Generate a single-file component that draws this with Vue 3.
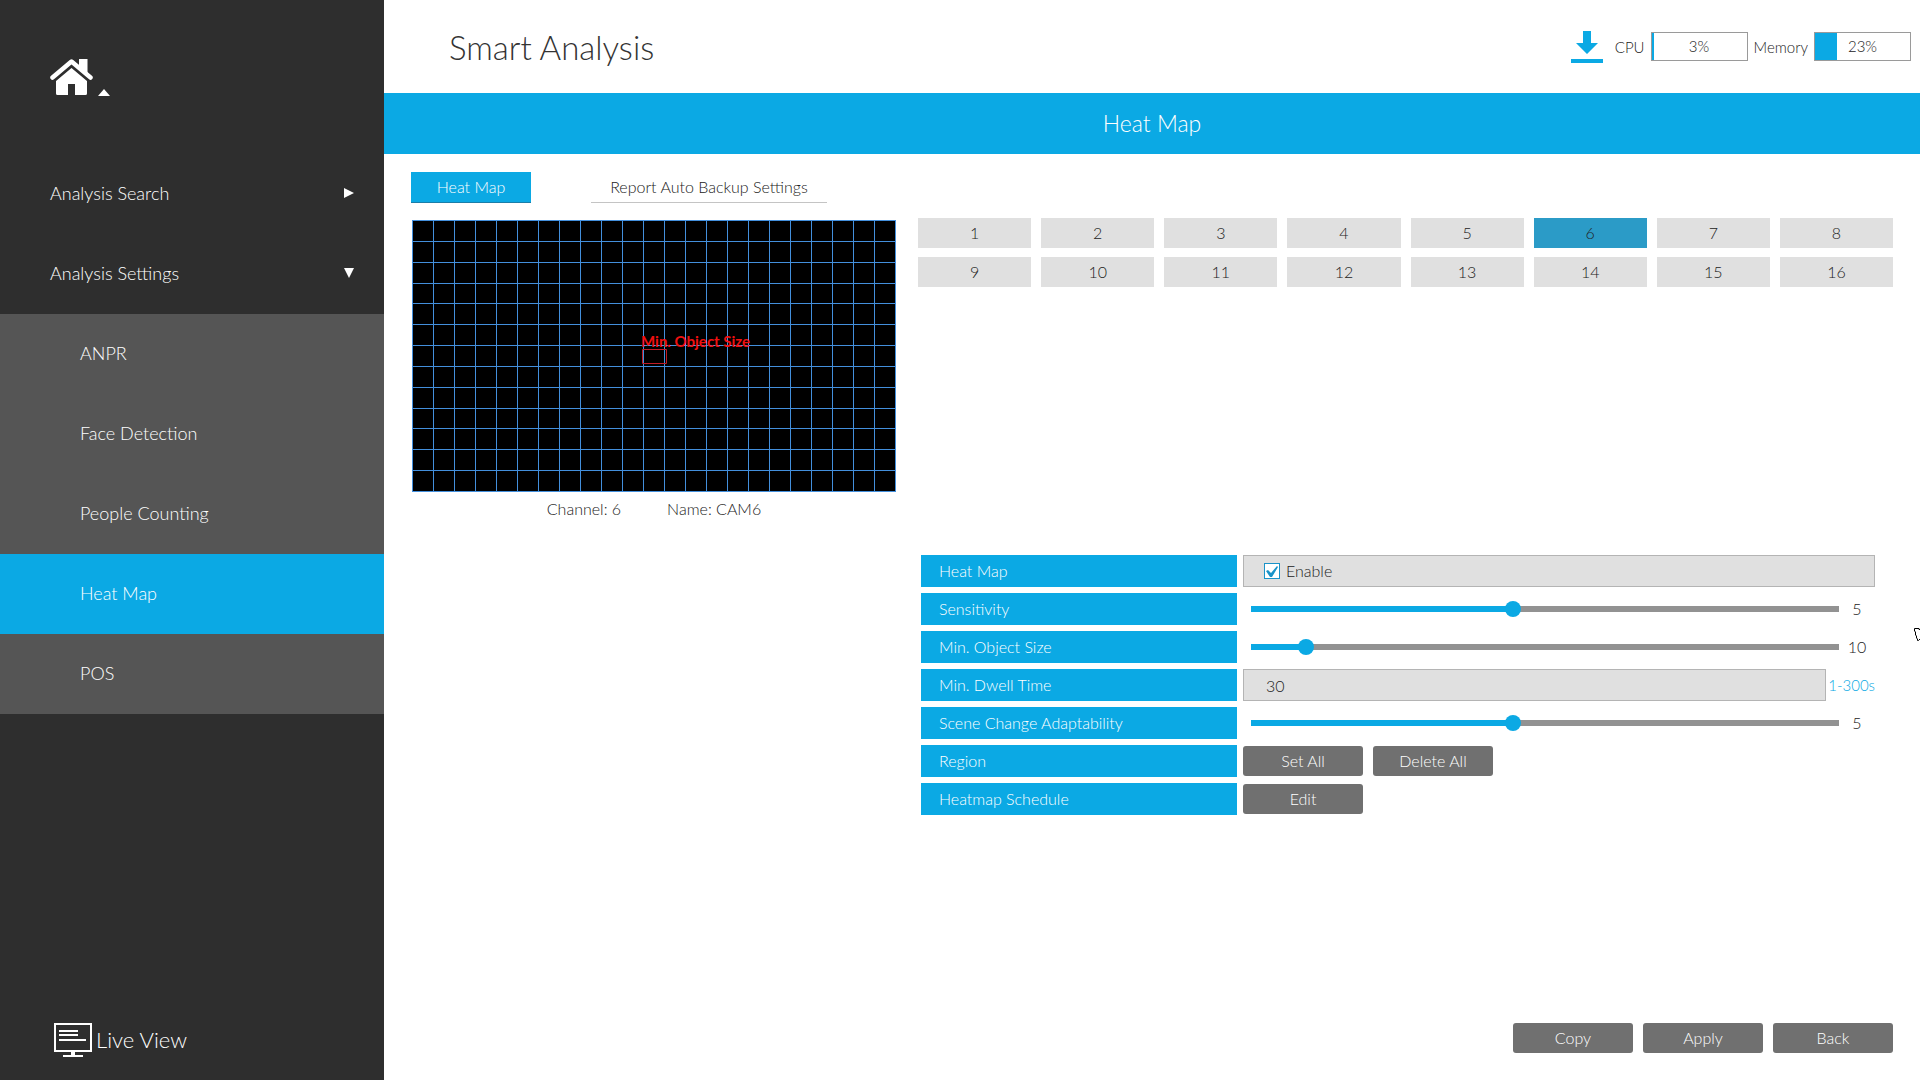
<script setup>
import { ref } from 'vue'

const subItems = ['ANPR', 'Face Detection', 'People Counting', 'Heat Map', 'POS']
const activeItem = ref('Heat Map')

const meters = [
  { label: 'CPU', value: 3 },
  { label: 'Memory', value: 23 },
]

const channel = ref(6)
const enabled = ref(true)
const sensitivity = ref(5)
const objectSize = ref(10)
const dwellTime = ref('30')
const adaptability = ref(5)

const columnLines = Array.from({ length: 24 }, (_, i) => i * 21)
const rowLines = [0, 21, 42, 63, 83, 104, 125, 146, 167, 188, 208, 229, 250, 271]

// The fill ends under the centre of the 16px thumb.
function fill(value, min, max) {
  const ratio = (value - min) / (max - min)
  return { '--fill': `calc(8px + (100% - 16px) * ${ratio})` }
}
</script>

<template>
  <div class="app">
    <aside class="sidebar">
      <div class="home-row">
        <button class="home" type="button" aria-label="Home">
          <svg width="60" height="38" viewBox="0 0 60 38" fill="#fff">
            <path d="M6 22 21.5 9 37 22V34.5a1.500 1.500 0 0 1-1.500 1.500H25V25H18V36H7.500A1.500 1.500 0 0 1 6 34.500Z" />
            <path d="M2.500 18.500 21.500 2.500 40.500 18.500" fill="none" stroke="#fff" stroke-width="4.500" stroke-linecap="round" stroke-linejoin="round" />
            <path d="M29 0H37.500V15L29 8Z" />
            <path d="M48 37 54 30 60 37Z" />
          </svg>
        </button>
      </div>
      <nav class="menu">
        <button class="menu-item" type="button">
          <span>Analysis Search</span>
          <svg width="10" height="10" viewBox="0 0 10 10"><path d="M0 0 10 5 0 10Z" fill="#fff" /></svg>
        </button>
        <button class="menu-item" type="button">
          <span>Analysis Settings</span>
          <svg width="10" height="10" viewBox="0 0 10 10"><path d="M0 0H10L5 10Z" fill="#fff" /></svg>
        </button>
        <div class="submenu">
          <button
            v-for="item in subItems"
            :key="item"
            class="sub-item"
            :class="{ active: item === activeItem }"
            type="button"
            @click="activeItem = item"
          >{{ item }}</button>
        </div>
      </nav>
      <button class="live-view" type="button">
        <svg width="38" height="34" viewBox="0 0 38 34" fill="none" stroke="#fff">
          <path d="M1 1H37V28H1Z" stroke-width="2" />
          <path d="M5 8H24M5 12H24M5 17H32" stroke-width="2" />
          <path d="M19 28V33" stroke-width="4" />
          <path d="M9 33H29" stroke-width="2" />
        </svg>
        <span>Live View</span>
      </button>
    </aside>

    <main class="main">
      <header class="header">
        <h1>Smart Analysis</h1>
        <div class="status">
          <button class="download" type="button" aria-label="Download">
            <svg width="32" height="32" viewBox="0 0 32 32" fill="#0ba9e4">
              <path d="M12 0H20V12H27L16 23 5 12H12Z" />
              <path d="M0 28H32V32H0Z" />
            </svg>
          </button>
          <div v-for="m in meters" :key="m.label" class="meter">
            <span>{{ m.label }}</span>
            <div class="meter-box">
              <div class="meter-fill" :style="{ width: m.value + '%' }"></div>
              <span class="meter-text">{{ m.value }}%</span>
            </div>
          </div>
        </div>
      </header>
      <h2 class="banner">Heat Map</h2>

      <section class="content">
        <div class="tabs">
          <button class="tab active" type="button">Heat Map</button>
          <button class="tab wide" type="button">Report Auto Backup Settings</button>
        </div>

        <div class="columns">
          <div class="camera">
            <svg width="484" height="272" viewBox="0 0 484 272">
              <rect width="484" height="272" fill="#000" />
              <g fill="#438fdc">
                <rect v-for="x in columnLines" :key="'c' + x" :x="x" y="0" width="1" height="272" />
                <rect v-for="y in rowLines" :key="'r' + y" x="0" :y="y" width="484" height="1" />
              </g>
              <path d="M230.500 129.500H254.500V143.500H230.500Z" fill="none" stroke="#c01c28" />
              <text x="229" y="127" class="object-label">Min. Object Size</text>
            </svg>
            <div class="caption">
              <span>Channel: {{ channel }}</span>
              <span>Name: CAM{{ channel }}</span>
            </div>
          </div>

          <div class="settings">
            <div class="channels">
              <button
                v-for="n in 16"
                :key="n"
                class="channel"
                :class="{ active: n === channel }"
                type="button"
                @click="channel = n"
              >{{ n }}</button>
            </div>

            <form class="form" @submit.prevent>
              <div class="row">
                <span class="label">Heat Map</span>
                <label class="field check">
                  <input v-model="enabled" type="checkbox" />
                  <span>Enable</span>
                </label>
              </div>
              <div class="row">
                <label class="label" for="sensitivity">Sensitivity</label>
                <div class="slider">
                  <input id="sensitivity" v-model.number="sensitivity" type="range" min="1" max="10" :style="fill(sensitivity, 1, 10)" />
                  <output for="sensitivity">{{ sensitivity }}</output>
                </div>
              </div>
              <div class="row">
                <label class="label" for="object-size">Min. Object Size</label>
                <div class="slider">
                  <input id="object-size" v-model.number="objectSize" type="range" min="2" max="100" :style="fill(objectSize, 2, 100)" />
                  <output for="object-size">{{ objectSize }}</output>
                </div>
              </div>
              <div class="row">
                <label class="label" for="dwell">Min. Dwell Time</label>
                <input id="dwell" v-model="dwellTime" class="field dwell" type="text" />
                <span class="hint">1-300s</span>
              </div>
              <div class="row">
                <label class="label" for="adaptability">Scene Change Adaptability</label>
                <div class="slider">
                  <input id="adaptability" v-model.number="adaptability" type="range" min="1" max="10" :style="fill(adaptability, 1, 10)" />
                  <output for="adaptability">{{ adaptability }}</output>
                </div>
              </div>
              <div class="row">
                <span class="label">Region</span>
                <div class="buttons">
                  <button class="btn" type="button">Set All</button>
                  <button class="btn" type="button">Delete All</button>
                </div>
              </div>
              <div class="row">
                <span class="label">Heatmap Schedule</span>
                <div class="buttons">
                  <button class="btn" type="button">Edit</button>
                </div>
              </div>
            </form>
          </div>
        </div>

        <footer class="buttons footer">
          <button class="btn" type="button">Copy</button>
          <button class="btn" type="button">Apply</button>
          <button class="btn" type="button">Back</button>
        </footer>
      </section>
    </main>

    <svg class="pointer" width="6" height="14" viewBox="0 0 6 14" aria-hidden="true">
      <path d="M6 1.500H5V0.500H0.500V3L1.500 4V7L2.500 8V10L3.500 11V12.500H4.500L6 11" fill="#fff" stroke="#000" />
    </svg>
  </div>
</template>

<style>
body {
  margin: 0;
}
</style>

<style scoped>
.app {
  position: relative;
  display: flex;
  min-height: 100vh;
  overflow: hidden;
  background: #fff;
  color: #222;
  font-family: Lato, "Open Sans", sans-serif;
  font-size: 16px;
  font-weight: 300;
  line-height: 20px;
}

.app *,
.app *::before {
  box-sizing: border-box;
}

button,
input {
  margin: 0;
  padding: 0;
  border: 0;
  border-radius: 0;
  background: none;
  color: inherit;
  font: inherit;
}

svg {
  display: block;
  flex: none;
}

/* Sidebar */
.sidebar {
  display: flex;
  flex: none;
  flex-direction: column;
  width: 20%;
  background: #2e2e2e;
  color: #fff;
}

.home-row {
  height: 154px;
  padding: 59px 50px 0;
}

.menu-item,
.sub-item {
  display: flex;
  align-items: center;
  justify-content: space-between;
  width: 100%;
  height: 80px;
  padding: 0 30px 2px 50px;
  font-size: 18px;
}

.sub-item {
  padding-left: 80px;
  background: #555;
}

.sub-item.active {
  background: #0ba9e4;
}

.live-view {
  display: flex;
  align-items: center;
  gap: 4px;
  margin: auto 0 23px 54px;
  font-size: 22px;
}

/* Header */
.main {
  display: flex;
  flex: 1;
  flex-direction: column;
  min-width: 0;
}

.header {
  display: flex;
  align-items: center;
  justify-content: space-between;
  height: 93px;
  padding: 0 9px 0 65px;
}

h1 {
  margin: 0;
  color: #333;
  font-size: 33px;
  font-weight: 300;
  line-height: 40px;
}

.status {
  display: flex;
  align-items: center;
  gap: 6px;
  font-size: 15px;
}

.download {
  margin-right: 6px;
}

.meter {
  display: flex;
  align-items: center;
  gap: 6px;
}

.meter-box {
  position: relative;
  width: 97px;
  height: 29px;
  border: 1px solid #9a9a9a;
  text-align: center;
}

.meter-fill {
  position: absolute;
  inset: 0 auto 0 0;
  background: #0ba9e4;
}

.meter-text {
  position: relative;
  line-height: 27px;
}

.banner {
  margin: 0;
  background: #0ba9e4;
  color: #fff;
  font-size: 23px;
  font-weight: 300;
  line-height: 61px;
  text-align: center;
}

/* Content */
.content {
  display: flex;
  flex: 1;
  flex-direction: column;
  padding: 18px 27px 27px;
}

.tabs {
  display: flex;
  gap: 60px;
  margin-bottom: 15px;
}

.tab {
  width: 120px;
  height: 31px;
  border-bottom: 1px solid #c4c4c4;
}

.tab.wide {
  width: 236px;
}

.tab.active {
  border-bottom-color: #1c7da8;
  background: #0ba9e4;
  color: #fff;
}

.columns {
  display: flex;
  gap: 22px;
}

.camera {
  flex: none;
  padding: 2px 0 0 1px;
}

.object-label {
  fill: #f01010;
  font-size: 15px;
  font-weight: 700;
}

.caption {
  display: flex;
  justify-content: center;
  gap: 46px;
  margin-top: 7px;
}

.settings {
  flex: 1;
  min-width: 0;
}

.channels {
  display: grid;
  grid-template-columns: repeat(8, 1fr);
  gap: 9px 10px;
}

.channel {
  height: 30px;
  background: #e0e0e0;
}

.channel.active {
  background: #2b9bc7;
}

.form {
  display: flex;
  flex-direction: column;
  gap: 6px;
  margin: 268px 18px 0 3px;
}

.row {
  display: flex;
  align-items: center;
  height: 32px;
}

.label {
  flex: none;
  width: 316px;
  height: 32px;
  margin-right: 6px;
  padding-left: 18px;
  background: #0ba9e4;
  color: #fff;
  line-height: 31px;
}

.field {
  flex: 1;
  min-width: 0;
  height: 32px;
  border: 1px solid #b4b4b4;
  background: #e0e0e0;
}

.check {
  display: flex;
  align-items: center;
  gap: 6px;
  padding-left: 20px;
}

.check input {
  width: 16px;
  height: 16px;
  border: 1px solid #1a93c8;
  background: #fff;
  appearance: none;
}

.check input:checked::before {
  display: block;
  width: 14px;
  height: 14px;
  background: #1a93c8;
  clip-path: polygon(1px 7px, 3px 6px, 6px 9px, 12px 2px, 13px 3px, 7px 13px, 5px 13px);
  content: "";
}

.dwell {
  padding-left: 22px;
}

.hint {
  width: 49px;
  color: #0ba9e4;
  font-size: 15px;
  text-align: right;
  white-space: nowrap;
}

.slider {
  display: flex;
  flex: 1;
  align-items: center;
  padding-left: 8px;
}

.slider input {
  flex: 1;
  min-width: 0;
  height: 16px;
  appearance: none;
}

.slider input::-webkit-slider-runnable-track {
  height: 6px;
  background: linear-gradient(to right, #0ba9e4 var(--fill), #929292 var(--fill));
}

.slider input::-webkit-slider-thumb {
  width: 16px;
  height: 16px;
  margin-top: -5px;
  border-radius: 50%;
  background: #0ba9e4;
  appearance: none;
}

.slider output {
  width: 36px;
  text-align: center;
}

.buttons {
  display: flex;
  gap: 10px;
}

.btn {
  width: 120px;
  height: 30px;
  border-radius: 3px;
  background: #707070;
  color: #fff;
}

.footer {
  justify-content: flex-end;
  margin-top: auto;
}

.pointer {
  position: absolute;
  top: 628px;
  right: 0;
}
</style>
